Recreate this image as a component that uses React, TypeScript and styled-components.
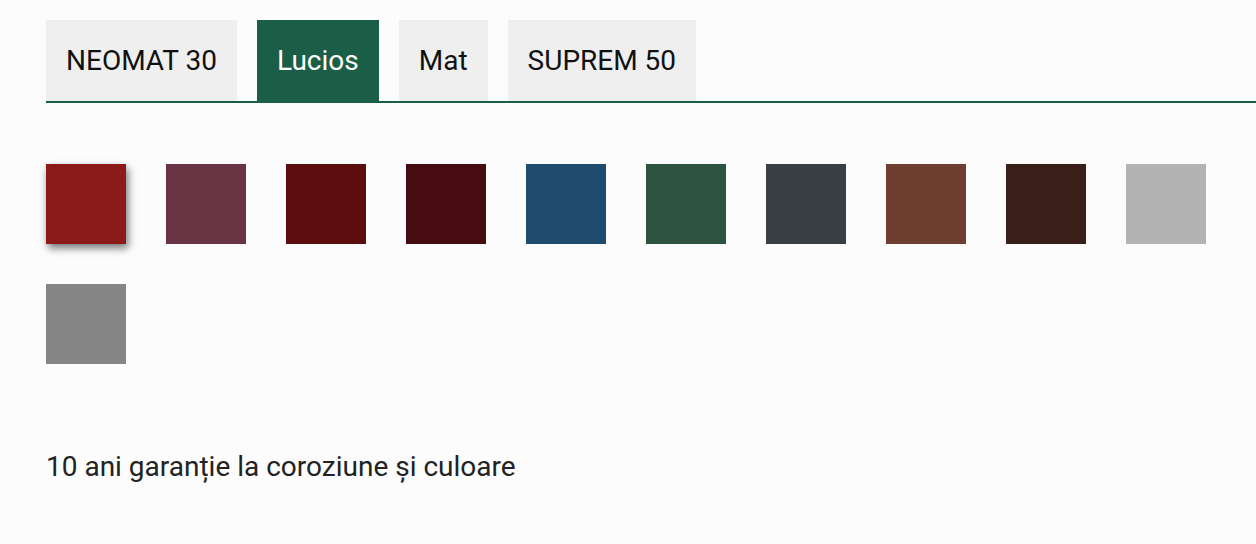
import * as React from "react";
import styled, { createGlobalStyle } from "styled-components";

const green = "#1b5e47";

const GlobalStyle = createGlobalStyle`
  html, body {
    margin: 0;
    padding: 0;
    background: #fcfcfc;
    font-family: Roboto, "Liberation Sans", sans-serif;
  }
`;

const Root = styled.div`
  padding: 20px 0 0 46px;
  box-sizing: border-box;
  width: 100vw;
  min-height: 100vh;
`;

const TabList = styled.div`
  display: flex;
  gap: 20px;
  border-bottom: 2px solid ${green};
`;

const Tab = styled.div<{ $active?: boolean }>`
  height: 81px;
  padding: 0 20px;
  display: flex;
  align-items: center;
  font-size: 28px;
  color: ${(p) => (p.$active ? "#ffffff" : "#111111")};
  background: ${(p) => (p.$active ? green : "#efefef")};
  box-sizing: border-box;
`;

const Swatches = styled.div`
  display: grid;
  grid-template-columns: repeat(10, 80px);
  gap: 40px;
  margin-top: 61px;
`;

const Swatch = styled.div<{ $color: string; $selected?: boolean }>`
  width: 80px;
  height: 80px;
  background: ${(p) => p.$color};
  box-shadow: ${(p) => (p.$selected ? "2px 4px 8px rgba(0, 0, 0, 0.55)" : "none")};
`;

const Note = styled.p`
  margin: 86px 0 0;
  font-size: 28px;
  line-height: 33px;
  color: #222222;
`;

const tabs = ["NEOMAT 30", "Lucios", "Mat", "SUPREM 50"];

const colors = [
  "#8b1a1a",
  "#683343",
  "#5e0d0f",
  "#470c11",
  "#1f4b6e",
  "#2d523d",
  "#384043",
  "#6e3e30",
  "#3a1e19",
  "#b3b3b3",
  "#858585",
];

const App = () => {
  return (
    <Root>
      <GlobalStyle />
      <TabList>
        {tabs.map((t) => (
          <Tab key={t} $active={t === "Lucios"}>
            {t}
          </Tab>
        ))}
      </TabList>
      <Swatches>
        {colors.map((c, i) => (
          <Swatch key={c} $color={c} $selected={i === 0} />
        ))}
      </Swatches>
      <Note>10 ani garanție la coroziune și culoare</Note>
    </Root>
  );
};

export default App;
